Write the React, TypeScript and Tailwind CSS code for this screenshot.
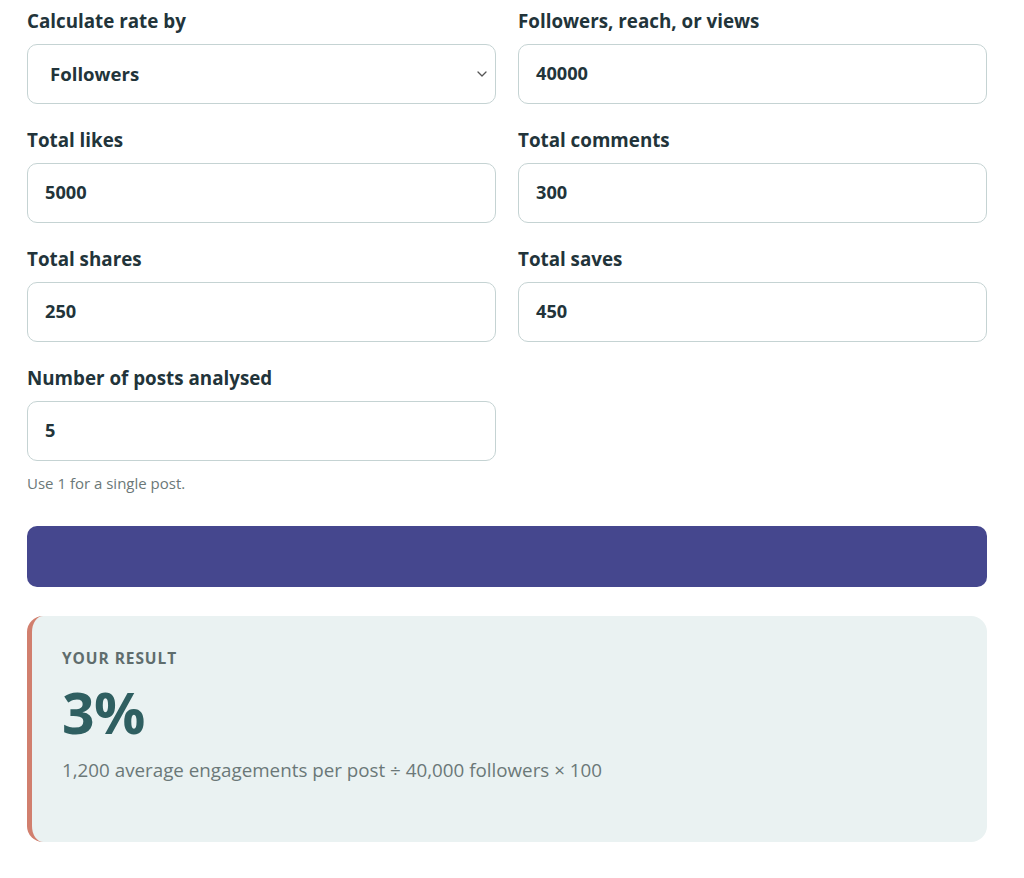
import React from "react";

function Field({ label, value, help }: { label: string; value: string; help?: string }) {
  return (
    <div className="flex flex-col">
      <label className="text-[18.8px] leading-[27px] font-bold text-[#22343a] mb-[9px]">{label}</label>
      <div className="h-[60px] rounded-[10px] border border-[#c5d3d3] bg-white flex items-center px-[17px] text-[18.2px] font-bold text-[#22343a]">
        {value}
      </div>
      {help && <p className="text-[15px] leading-[20px] text-[#6b7878] mt-[12px]">{help}</p>}
    </div>
  );
}

export default function App() {
  return (
    <div className="w-[1024px] min-h-[878px] bg-white" style={{ fontFamily: '"Open Sans", "Noto Sans", sans-serif' }}>
      <div className="ml-[27px] w-[960px] pt-[8px]">
        <div className="grid grid-cols-2 gap-x-[22px] gap-y-[23px]">
          <div className="flex flex-col">
            <label className="text-[18.8px] leading-[27px] font-bold text-[#22343a] mb-[9px]">Calculate rate by</label>
            <div className="h-[60px] rounded-[10px] border border-[#c5d3d3] bg-white flex items-center justify-between pl-[22px] pr-[8px] text-[18.6px] font-bold text-[#22343a]">
              <span>Followers</span>
              <svg width="10" height="6" viewBox="0 0 10 6" fill="none">
                <path d="M1 1l4 4 4-4" stroke="#555" strokeWidth="1.3" strokeLinecap="round" strokeLinejoin="round" />
              </svg>
            </div>
          </div>
          <Field label="Followers, reach, or views" value="40000" />
          <Field label="Total likes" value="5000" />
          <Field label="Total comments" value="300" />
          <Field label="Total shares" value="250" />
          <Field label="Total saves" value="450" />
          <Field label="Number of posts analysed" value="5" help="Use 1 for a single post." />
        </div>
        <button className="mt-[33px] w-full h-[61px] rounded-[10px] bg-[#45478e] block" />
        <div className="mt-[29px] h-[226px] rounded-[16px] bg-[#eaf2f2] border-l-[5px] border-[#d17f6e] pl-[30px] pt-[31px]">
          <div className="text-[15.5px] leading-[22px] font-bold tracking-[0.06em] text-[#5f6d6d]">YOUR RESULT</div>
          <div className="text-[57px] leading-[64px] font-bold text-[#2f5f61] mt-[11px] tracking-[-0.01em]">3%</div>
          <div className="text-[18.8px] leading-[27px] text-[#6b7878] mt-[13px]">
            1,200 average engagements per post ÷ 40,000 followers × 100
          </div>
        </div>
      </div>
    </div>
  );
}
